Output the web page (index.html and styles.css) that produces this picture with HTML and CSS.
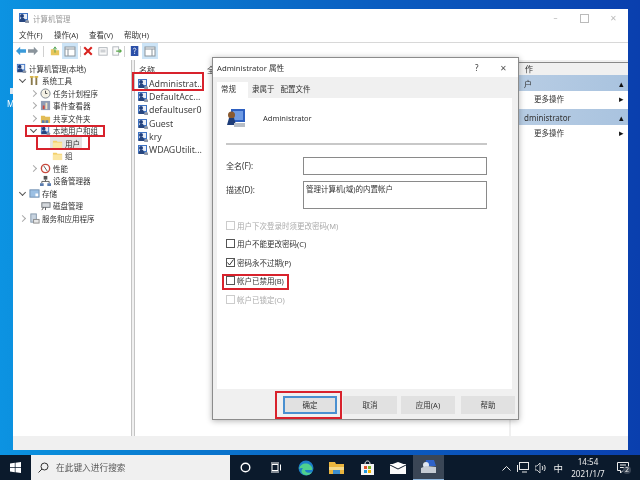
FILE: index.html
```html
<!DOCTYPE html>
<html lang="zh-CN">
<head>
    <meta charset="UTF-8">
    <title>计算机管理</title>
    <link rel="stylesheet" href="styles.css">
</head>
<body>
    <svg class="defs" width="0" height="0">
        <symbol id="user" viewBox="0 0 12 12">
            <rect x="1" y="1" width="9" height="8" fill="#3f74c4"/>
            <rect x="2" y="2" width="7" height="5" fill="#e8eef8"/>
            <circle cx="4" cy="4" r="2" fill="#1f3f7f"/>
            <path d="M1 10l2-4h3l2 4z" fill="#27467f"/>
            <path d="M7 11h4V9l-1-1H8z" fill="#8d97a8"/>
        </symbol>
        <symbol id="folder" viewBox="0 0 12 12">
            <path d="M1 3h4l1 1h5v7H1z" fill="#f3cf6b"/>
            <path d="M1 5h10v6H1z" fill="#fbe6a2"/>
        </symbol>
    </svg>

    <div class="desktop">
        <div class="shortcut">M</div>
        <div class="window">
            <div class="title-bar">
                <svg class="title-icon" width="12" height="12"><use href="#user"/></svg>
                <span class="title-text">计算机管理</span>
                <div class="window-buttons">
                    <span class="win-btn">&#x2013;</span>
                    <span class="win-btn win-max"></span>
                    <span class="win-btn">&#x2715;</span>
                </div>
            </div>
            <div class="menu-bar">
                <span>文件(F)</span><span>操作(A)</span><span>查看(V)</span><span>帮助(H)</span>
            </div>
            <div class="tool-bar">
                <svg class="tool" viewBox="0 0 12 12"><path d="M0 6l5-5v3h7v4H5v3z" fill="#3a9ad9"/></svg>
                <svg class="tool" viewBox="0 0 12 12"><path d="M12 6L7 1v3H0v4h7v3z" fill="#8a949c"/></svg>
                <span class="tool-sep sep-first"></span>
                <svg class="tool" viewBox="0 0 12 12"><path d="M1 4h4l1 1h5v6H1z" fill="#e8c65c"/><path d="M6 8V2M4 4l2-3 2 3" stroke="#3f9a3f" fill="none"/></svg>
                <span class="tool-on"><svg width="12" height="12" viewBox="0 0 12 12"><rect x="1" y="2" width="10" height="9" fill="#fff" stroke="#8a949c"/><path d="M1 4h10M4 4v7" stroke="#8a949c"/></svg></span>
                <span class="tool-sep"></span>
                <svg class="tool" viewBox="0 0 12 12"><path d="M1.500 1.500l9 9M10.500 1.500l-9 9" stroke="#d8231f" stroke-width="2.500"/></svg>
                <svg class="tool tool-props" viewBox="0 0 12 12"><rect x="1" y="2" width="10" height="9" fill="#fafafa" stroke="#a8aeb4"/><path d="M3 5h6M3 7h6" stroke="#a8aeb4"/></svg>
                <svg class="tool tool-export" viewBox="0 0 12 12"><rect x="1" y="1" width="7" height="10" fill="#fafafa" stroke="#a8aeb4"/><path d="M5 6h6M9 4l2 2-2 2" stroke="#58a848" fill="none" stroke-width="1.500"/></svg>
                <span class="tool-sep sep-last"></span>
                <svg class="tool" viewBox="0 0 12 12"><rect x="1" y="0" width="9" height="12" fill="#2b4fa8"/><path d="M4 4c0-2 3-2 3 0 0 1-1.500 1-1.500 3M5.500 8v1.500" stroke="#fff" fill="none"/></svg>
                <span class="tool-on"><svg width="12" height="12" viewBox="0 0 12 12"><rect x="1" y="2" width="10" height="9" fill="#fff" stroke="#8a949c"/><path d="M1 4h10M8 4v7" stroke="#8a949c"/></svg></span>
            </div>
            <div class="panes">
                <div class="tree">
                    <div class="node">
                        <svg width="11" height="11"><use href="#user"/></svg>计算机管理(本地)
                    </div>
                    <div class="node lvl1"><span class="arrow open"></span><svg width="11" height="11" viewBox="0 0 12 12"><path d="M3 1v10M8 1v10" stroke="#8a7a4c" stroke-width="2"/><path d="M1 2h4M6 2h4" stroke="#d9b64a" stroke-width="2"/></svg>系统工具</div>
                    <div class="node lvl2"><span class="arrow closed"></span><svg width="11" height="11" viewBox="0 0 12 12"><circle cx="6" cy="6" r="5" fill="#f4f1e4" stroke="#77808a"/><path d="M6 3v3h2" stroke="#444" fill="none"/></svg>任务计划程序</div>
                    <div class="node lvl2"><span class="arrow closed"></span><svg width="11" height="11" viewBox="0 0 12 12"><rect x="1" y="1" width="10" height="10" fill="#8f9bb4"/><rect x="3" y="6" width="2" height="4" fill="#d1473c"/><rect x="6" y="3" width="2" height="7" fill="#f0e0c0"/></svg>事件查看器</div>
                    <div class="node lvl2"><span class="arrow closed"></span><svg width="11" height="11" viewBox="0 0 12 12"><path d="M1 3h4l1 1h5v7H1z" fill="#e2bc55"/><path d="M2 8h3v3H2zM6 8h3v3H6z" fill="#5b7cae"/></svg>共享文件夹</div>
                    <div class="node lvl2"><span class="arrow open"></span><svg width="11" height="11"><use href="#user"/></svg>本地用户和组</div>
                    <div class="node lvl3 selected"><svg width="11" height="11"><use href="#folder"/></svg>用户</div>
                    <div class="node lvl3"><svg width="11" height="11"><use href="#folder"/></svg>组</div>
                    <div class="node lvl2"><span class="arrow closed"></span><svg width="11" height="11" viewBox="0 0 12 12"><circle cx="6" cy="6" r="4.500" fill="#fff" stroke="#c8483c" stroke-width="1.500"/><path d="M4 3l4 6" stroke="#555"/></svg>性能</div>
                    <div class="node lvl2"><span class="arrow"></span><svg width="11" height="11" viewBox="0 0 12 12"><rect x="4" y="1" width="4" height="4" fill="#555"/><path d="M6 5v2M2 9V7h8v2" stroke="#555" fill="none"/><rect x="0" y="9" width="4" height="3" fill="#5b7cae"/><rect x="8" y="9" width="4" height="3" fill="#5b7cae"/></svg>设备管理器</div>
                    <div class="node lvl1"><span class="arrow open"></span><svg width="11" height="11" viewBox="0 0 12 12"><rect x="1" y="2" width="10" height="8" fill="#9cc0e4" stroke="#6f8fb0"/><rect x="7" y="6" width="3" height="3" fill="#fff"/></svg>存储</div>
                    <div class="node lvl2"><span class="arrow"></span><svg width="11" height="11" viewBox="0 0 12 12"><rect x="2" y="3" width="9" height="5" fill="#d4d8dc" stroke="#70767c"/><path d="M2 11l2-3M6 11V8" stroke="#555"/></svg>磁盘管理</div>
                    <div class="node lvl1"><span class="arrow closed"></span><svg width="11" height="11" viewBox="0 0 12 12"><rect x="2" y="1" width="6" height="9" fill="#c8d4e0" stroke="#8296aa"/><rect x="5" y="7" width="6" height="4" fill="#e8e8e8" stroke="#8a8a8a"/></svg>服务和应用程序</div>
                </div>
                <div class="list">
                    <div class="list-head"><span class="col-name">名称</span><span>全</span></div>
                    <div class="list-row"><svg width="12" height="12"><use href="#user"/></svg>Administrat...</div>
                    <div class="list-row"><svg width="12" height="12"><use href="#user"/></svg>DefaultAcc...</div>
                    <div class="list-row"><svg width="12" height="12"><use href="#user"/></svg>defaultuser0</div>
                    <div class="list-row"><svg width="12" height="12"><use href="#user"/></svg>Guest</div>
                    <div class="list-row"><svg width="12" height="12"><use href="#user"/></svg>kry</div>
                    <div class="list-row"><svg width="12" height="12"><use href="#user"/></svg>WDAGUtilit...</div>
                </div>
                <div class="actions">
                    <div class="actions-head">作</div>
                    <div class="action-group"><span>户</span><span class="caret">&#x25B4;</span></div>
                    <div class="action-item"><span>更多操作</span><span class="caret">&#x25B8;</span></div>
                    <div class="action-group"><span>dministrator</span><span class="caret">&#x25B4;</span></div>
                    <div class="action-item"><span>更多操作</span><span class="caret">&#x25B8;</span></div>
                </div>
            </div>
        </div>

        <div class="dialog">
            <div class="dialog-title">
                <span class="dialog-name">Administrator 属性</span>
                <span class="dialog-help">?</span>
                <span class="dialog-close">&#x2715;</span>
            </div>
            <div class="tabs">
                <span class="tab active">常规</span>
                <span class="tab">隶属于</span>
                <span class="tab">配置文件</span>
            </div>
            <div class="tab-page">
                <div class="user-line">
                    <svg width="20" height="20" viewBox="0 0 20 20">
                        <rect x="5" y="1" width="14" height="13" fill="#2d5fc0"/>
                        <rect x="7" y="3" width="10" height="9" fill="#6f9be4"/>
                        <circle cx="5.500" cy="7" r="3.500" fill="#8a5a30"/>
                        <path d="M1 17l2-7h5l2 7z" fill="#1d3c78"/>
                        <path d="M8 19h11v-4H8z" fill="#b8bec6"/>
                    </svg>
                    <span>Administrator</span>
                </div>
                <div class="divider"></div>
                <div class="field">
                    <label>全名(F):</label>
                    <div class="input"></div>
                </div>
                <div class="field">
                    <label>描述(D):</label>
                    <div class="input input-tall">管理计算机(域)的内置帐户</div>
                </div>
                <div class="checks">
                    <div class="check disabled"><span class="box"></span>用户下次登录时须更改密码(M)</div>
                    <div class="check"><span class="box"></span>用户不能更改密码(C)</div>
                    <div class="check"><span class="box checked"><svg width="9" height="9" viewBox="0 0 9 9"><path d="M1.500 4.500l2 2.500 4-5.500" stroke="#333" fill="none"/></svg></span>密码永不过期(P)</div>
                    <div class="check"><span class="box"></span>帐户已禁用(B)</div>
                    <div class="check disabled"><span class="box"></span>帐户已锁定(O)</div>
                </div>
            </div>
            <div class="dialog-buttons">
                <span class="btn primary">确定</span>
                <span class="btn btn-cancel">取消</span>
                <span class="btn">应用(A)</span>
                <span class="btn">帮助</span>
            </div>
        </div>

        <div class="mark mark-account"></div>
        <div class="mark mark-group"></div>
        <div class="mark mark-users"></div>
        <div class="mark mark-disabled"></div>
        <div class="mark mark-ok"></div>
    </div>

    <div class="taskbar">
        <span class="start">
            <svg width="11" height="11" viewBox="0 0 11 11"><path d="M0 1.500l4.800-.7v4.300H0zM5.500.7L11 0v5.100H5.500zM0 5.800h4.800v4.400L0 9.500zM5.500 5.800H11V11l-5.500-.8z" fill="#fff"/></svg>
        </span>
        <div class="search">
            <svg width="11" height="11" viewBox="0 0 11 11"><circle cx="6.500" cy="4.500" r="3.500" fill="none" stroke="#333"/><path d="M4 7l-3.500 3.500" stroke="#333"/></svg>
            <span>在此键入进行搜索</span>
        </div>
        <span class="task-icon"><svg width="11" height="11" viewBox="0 0 11 11"><circle cx="5.500" cy="5.500" r="4.300" fill="none" stroke="#fff" stroke-width="1.400"/></svg></span>
        <span class="task-icon"><svg width="11" height="11" viewBox="0 0 11 11"><rect x="2" y="2.500" width="6" height="6" fill="none" stroke="#fff"/><path d="M1 1h8M1 10h8M10.500 2.500v6" stroke="#fff"/></svg></span>
        <span class="task-icon"><svg width="16" height="16" viewBox="0 0 16 16"><circle cx="8" cy="8" r="7.500" fill="#1c7ec8"/><path d="M1 9c1-5 7-7 11-4 2 1.500 3 4 2 5H7c0 2 3 4 7 2-2 3.500-7 4-9 2-2-1-2-4 0-6-2 0-3 0-4 1z" fill="#4fd08e"/></svg></span>
        <span class="task-icon"><svg width="15" height="13" viewBox="0 0 15 13"><path d="M0 1h6l1 2h8v10H0z" fill="#eab53f"/><path d="M0 6h15v3H0z" fill="#f6d98a"/><path d="M4 9h7v4H4z" fill="#3b8ed0"/></svg></span>
        <span class="task-icon"><svg width="15" height="15" viewBox="0 0 15 15"><rect x="1" y="4" width="13" height="11" fill="#f4f4f4"/><path d="M5 4c0-4 5-4 5 0" fill="none" stroke="#f4f4f4"/><rect x="4" y="6" width="3" height="3" fill="#e0502a"/><rect x="8" y="6" width="3" height="3" fill="#7cb32a"/><rect x="4" y="10" width="3" height="3" fill="#1f9ae0"/><rect x="8" y="10" width="3" height="3" fill="#f4b400"/></svg></span>
        <span class="task-icon"><svg width="16" height="12" viewBox="0 0 16 12"><rect y="2" width="16" height="10" fill="#fafafa"/><path d="M0 3l8-3 8 3-8 4z" fill="#fff"/><path d="M0 3l8 4 8-4" stroke="#111c2c" fill="none"/></svg></span>
        <span class="task-icon task-active"><svg width="17" height="16" viewBox="0 0 17 16"><path d="M6 1h8l2 6H5z" fill="#2f62c8"/><circle cx="6" cy="6" r="3" fill="#dfe6f0"/><path d="M1 14V9l5-2 10 1v6z" fill="#c6ccd4"/></svg></span>
        <div class="tray">
            <svg width="9" height="6" viewBox="0 0 9 6"><path d="M.5 5.500l4-4 4 4" stroke="#e8e8e8" fill="none"/></svg>
            <svg width="12" height="11" viewBox="0 0 12 11"><rect x="2.500" y=".5" width="9" height="7" fill="none" stroke="#e8e8e8"/><path d="M.5 3v7M5 10h5" stroke="#e8e8e8"/></svg>
            <svg width="12" height="10" viewBox="0 0 12 10"><path d="M0 3h2l3-3v10L2 7H0z" fill="none" stroke="#e8e8e8" stroke-width=".8"/><path d="M7 3c1 1 1 3 0 4M9 2c1.500 1.500 1.500 4.500 0 6" stroke="#e8e8e8" fill="none"/></svg>
            <span class="ime">中</span>
            <div class="clock"><span>14:54</span><span>2021/1/7</span></div>
            <span class="notice">
                <svg width="12" height="12" viewBox="0 0 12 12"><path d="M.5.5h11v8H6l-2.500 2.500V8.500h-3z" fill="none" stroke="#eee"/><path d="M3 3h6M3 5.500h6" stroke="#eee"/></svg>
                <span class="notice-count">2</span>
            </span>
        </div>
    </div>
</body>
</html>
```

FILE: styles.css
```css
* {
    margin: 0;
    padding: 0;
    box-sizing: border-box;
}

body {
    width: 640px;
    height: 480px;
    overflow: hidden;
    font-family: "Noto Sans", "Noto Sans CJK SC", sans-serif;
    font-size: 7.500px;
    color: #333;
    display: flex;
    flex-direction: column;
    filter: blur(0.3px);
}

.defs {
    position: absolute;
}

.desktop {
    position: relative;
    height: 455px;
    background: linear-gradient(90deg, #0c93e2 0, #0a8ad8 10%, #0a5cc0 60%, #0a3fae 100%);
}

.shortcut {
    position: absolute;
    left: 7px;
    top: 98px;
    color: #fff;
    font-size: 8px;
}

.shortcut::before {
    content: "";
    position: absolute;
    left: 3px;
    top: -10px;
    width: 3px;
    height: 6px;
    background: #dfe8f0;
}

.window {
    position: absolute;
    left: 13px;
    top: 9px;
    width: 615px;
    height: 441px;
    background: #f0f0f0;
    display: flex;
    flex-direction: column;
}

.title-bar {
    height: 18px;
    background: #fff;
    display: flex;
    align-items: center;
    padding-left: 5px;
    flex-shrink: 0;
}

.title-icon {
    margin-right: 3px;
}

.title-text {
    color: #999;
}

.window-buttons {
    margin-left: auto;
    display: flex;
    color: #bbb;
    font-size: 8px;
}

.win-btn {
    width: 29px;
    text-align: center;
}

.win-max::after {
    content: "";
    display: block;
    width: 7px;
    height: 7px;
    margin: 2px auto;
    border: 1px solid #bbb;
}

.menu-bar {
    height: 15px;
    background: #fff;
    display: flex;
    padding-left: 6px;
    align-items: center;
    flex-shrink: 0;
}

.menu-bar span {
    width: 35px;
}

.tool-bar {
    height: 18px;
    background: #fff;
    border-top: 1px solid #d8d8d8;
    display: flex;
    align-items: center;
    padding: 0 0 1px 3px;
    gap: 2px;
    flex-shrink: 0;
}

.tool {
    width: 10px;
    height: 10px;
}

.tool-props {
    margin-left: 3px;
}

.tool-export {
    margin-left: 2px;
}

.tool-sep {
    width: 1px;
    height: 11px;
    background: #d0d0d0;
}

.sep-first {
    margin: 0 4px 0 3px;
}

.sep-last {
    margin-right: 3px;
}

.tool-on {
    background: #cce4f7;
    padding: 2px 2px 0;
    height: 16px;
}

.panes {
    flex: 1;
    display: flex;
    gap: 2px;
    min-height: 0;
    padding-bottom: 14px;
}

.tree {
    width: 119px;
    background: #fff;
    padding-top: 2px;
    border-right: 1px solid #c4c4c4;
}

.node {
    height: 12.500px;
    display: flex;
    align-items: center;
    gap: 2px;
    white-space: nowrap;
    padding-left: 3px;
}

.lvl1 {
    padding-left: 5px;
}

.lvl2 {
    padding-left: 16px;
}

.lvl3 {
    padding-left: 39px;
}

.selected {
    background: linear-gradient(90deg, #fff 37px, #e4e4e4 37px, #e4e4e4 69px, #fff 69px);
}

.arrow {
    width: 9px;
    height: 9px;
    display: flex;
    align-items: center;
    justify-content: center;
}

.open::before,
.closed::before {
    content: "";
    width: 4px;
    height: 4px;
    border-right: 1px solid #555;
    border-bottom: 1px solid #555;
}

.open::before {
    transform: translateY(-1px) rotate(45deg);
}

.closed::before {
    border-color: #aaa;
    transform: rotate(-45deg);
}

.list {
    width: 375px;
    background: #fff;
    border-left: 1px solid #c4c4c4;
    padding-left: 2px;
}

.list-head {
    height: 17px;
    display: flex;
    align-items: center;
    padding: 2px 0 0 2px;
    font-size: 8px;
}

.col-name {
    width: 68px;
}

.list-row {
    height: 13.300px;
    display: flex;
    align-items: center;
    font-size: 8.800px;
    color: #444;
}

.actions {
    flex: 1;
    background: #fff;
    border-top: 1px solid #888;
    margin-top: 2px;
    font-size: 8px;
}

.actions-head {
    height: 12px;
    background: #f0f0f0;
    padding-left: 14px;
    line-height: 12px;
}

.action-group {
    height: 16px;
    background: linear-gradient(90deg, #b8cde4, #a9c3df);
    display: flex;
    justify-content: space-between;
    align-items: center;
    padding: 0 4px 0 13px;
}

.action-item {
    height: 18px;
    display: flex;
    justify-content: space-between;
    align-items: center;
    padding: 0 4px 4px 23px;
    font-size: 7.500px;
}

.caret {
    color: #111;
    font-size: 9px;
}

.dialog {
    position: absolute;
    left: 212px;
    top: 57px;
    width: 307px;
    height: 363px;
    background: #f0f0f0;
    border: 1px solid #8c8c8c;
    box-shadow: 0 1px 6px rgba(0, 0, 0, 0.3);
    display: flex;
    flex-direction: column;
}

.dialog-title {
    height: 19px;
    background: #fff;
    display: flex;
    align-items: center;
    padding-left: 4px;
    flex-shrink: 0;
}

.dialog-name {
    font-size: 7.700px;
}

.dialog-help {
    margin-left: auto;
    width: 13px;
    font-size: 8px;
}

.dialog-close {
    width: 30px;
    text-align: center;
    color: #555;
    font-size: 8px;
}

.tabs {
    height: 21px;
    padding: 5px 0 0 4px;
    display: flex;
    flex-shrink: 0;
}

.tab {
    padding: 0 3px;
    line-height: 15px;
}

.tab.active {
    background: #fff;
    width: 31px;
    padding-left: 4px;
    margin-right: 1px;
}

.tab-page {
    margin: 0 6px 0 4px;
    height: 291px;
    background: #fff;
    padding: 10px 25px 0 9px;
    flex-shrink: 0;
}

.user-line {
    display: flex;
    align-items: center;
    gap: 17px;
    height: 20px;
}

.divider {
    height: 2px;
    background: #c8c8c8;
    margin: 15px 0 12px;
}

.field {
    display: flex;
    margin-bottom: 6px;
}

.field label {
    width: 77px;
    line-height: 18px;
    font-size: 8px;
}

.input {
    flex: 1;
    height: 18px;
    border: 1px solid #8a8a8a;
    padding: 2px;
    line-height: 10px;
}

.input-tall {
    height: 28px;
}

.checks {
    margin-top: 7px;
}

.check {
    height: 18.500px;
    display: flex;
    align-items: center;
    gap: 2px;
}

.box {
    width: 9px;
    height: 9px;
    border: 1px solid #555;
    display: inline-flex;
}

.box svg {
    margin: -1px;
}

.disabled {
    color: #aaa;
}

.disabled .box {
    border-color: #ccc;
}

.dialog-buttons {
    display: flex;
    justify-content: flex-end;
    gap: 6px;
    padding: 7px 3px 0 0;
}

.btn {
    width: 54px;
    height: 18px;
    line-height: 18px;
    text-align: center;
    background: #e1e1e1;
}

.btn-cancel {
    margin-right: -2px;
}

.btn.primary {
    border: 2px solid #4a90d0;
    line-height: 14px;
}

.mark {
    position: absolute;
    border: 2px solid #d8222c;
}

.mark-account {
    left: 132px;
    top: 72px;
    width: 72px;
    height: 19px;
}

.mark-group {
    left: 25px;
    top: 125px;
    width: 80px;
    height: 12px;
}

.mark-users {
    left: 36px;
    top: 135px;
    width: 54px;
    height: 15px;
}

.mark-disabled {
    left: 222px;
    top: 274px;
    width: 67px;
    height: 16px;
}

.mark-ok {
    left: 275px;
    top: 391px;
    width: 67px;
    height: 28px;
}

.taskbar {
    height: 25px;
    background: #0b1a2c;
    display: flex;
    align-items: center;
    color: #eee;
    flex-shrink: 0;
}

.start {
    width: 31px;
    display: flex;
    justify-content: center;
}

.search {
    width: 199px;
    height: 25px;
    background: #f0f0f0;
    display: flex;
    align-items: center;
    gap: 7px;
    padding-left: 7px;
    color: #555;
    font-size: 8.700px;
}

.task-icon {
    width: 30.500px;
    height: 25px;
    display: flex;
    align-items: center;
    justify-content: center;
}

.task-active {
    background: #3a4656;
    border-bottom: 1px solid #8fb8e0;
}

.tray {
    margin-left: auto;
    display: flex;
    align-items: center;
    gap: 6px;
    padding-right: 11px;
}

.ime {
    font-size: 9.500px;
}

.clock {
    display: flex;
    flex-direction: column;
    align-items: center;
    line-height: 12px;
    width: 38px;
    font-size: 8px;
}

.notice {
    position: relative;
    display: flex;
    margin-left: 4px;
}

.notice-count {
    position: absolute;
    left: 6px;
    top: 4px;
    width: 8px;
    height: 8px;
    line-height: 8px;
    border-radius: 50%;
    background: #3a4656;
    font-size: 7px;
    text-align: center;
}
```
